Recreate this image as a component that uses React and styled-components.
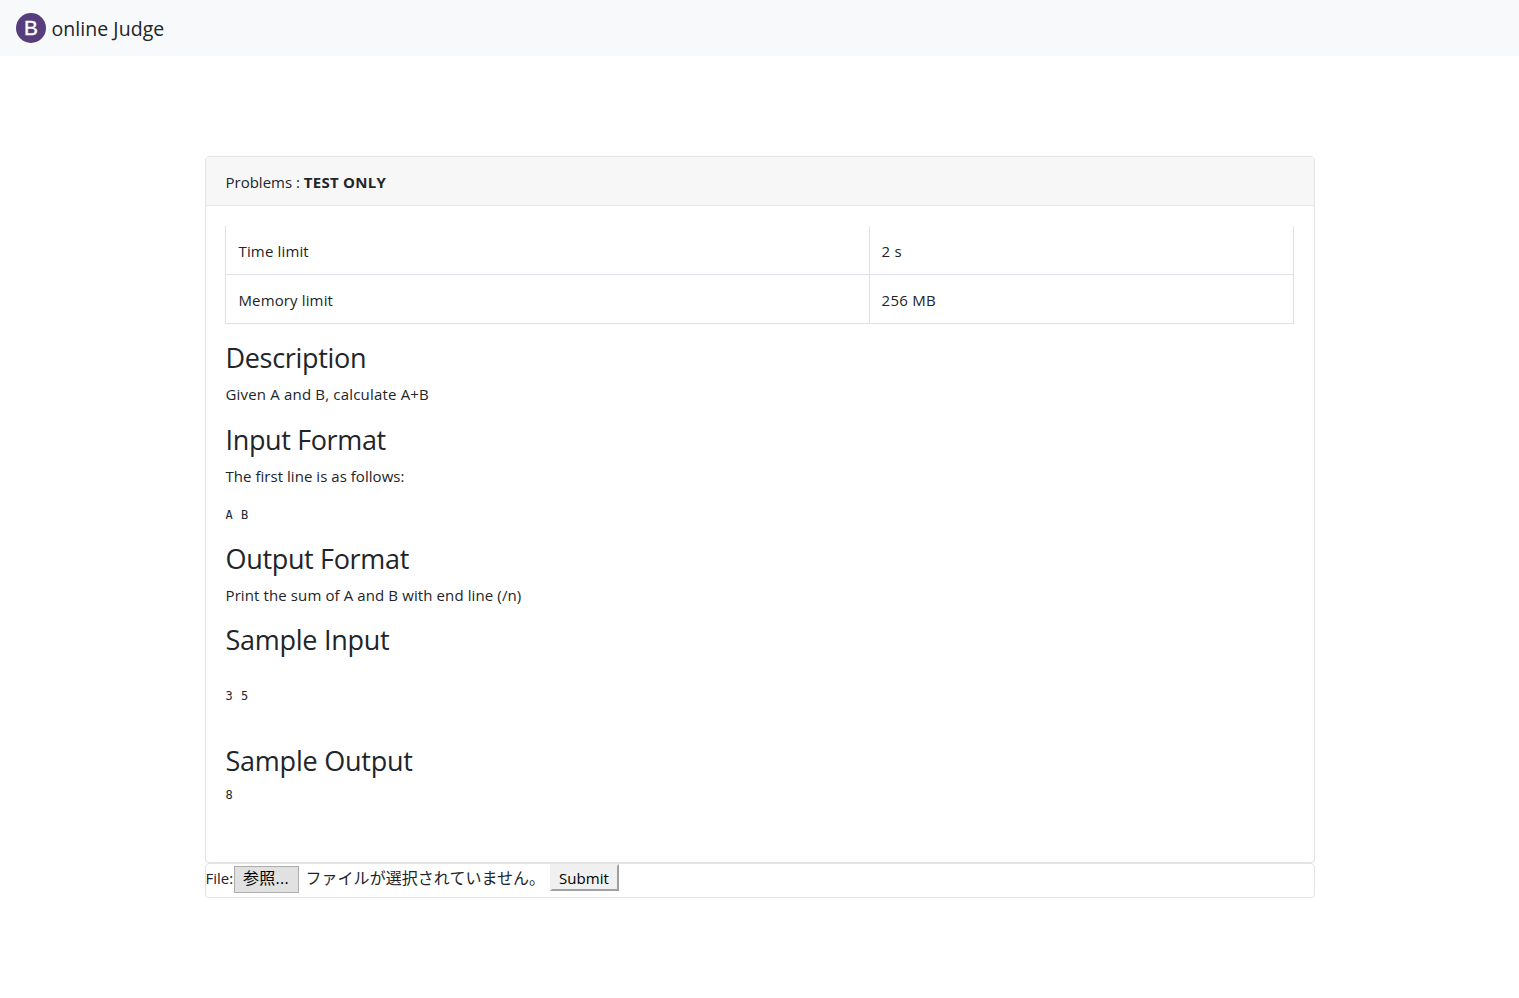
import React from "react";
import styled, { createGlobalStyle } from "styled-components";

const Global = createGlobalStyle`
  *, *::before, *::after { box-sizing: border-box; }
  body {
    margin: 0;
    background: #fff;
    color: #212529;
    font: 400 15px/24px "Open Sans", "Noto Sans CJK JP", sans-serif;
  }
`;

const Navbar = styled.nav`
  display: flex;
  align-items: center;
  height: 56px;
  padding: 0 16px;
  background: #f8f9fa;
`;

const Brand = styled.a`
  display: flex;
  align-items: center;
  gap: 5.5px;
  font-size: 19.5px;
  line-height: 30px;
  letter-spacing: 0.05px;
  white-space: nowrap;
`;

const BrandName = styled.span`
  padding-top: 2px;
`;

const Container = styled.main`
  width: 1110px;
  margin: 100px auto 0;
`;

const Card = styled.section`
  background: #fff;
  border: 1px solid #e3e3e3;
  border-radius: 4px;
`;

const CardHeader = styled.header`
  height: 49px;
  padding: 13px 20px 11px;
  background: #f7f7f7;
  border-bottom: 1px solid #e7e7e7;

  strong {
    font-weight: 700;
    letter-spacing: 0.25px;
  }
`;

const CardBody = styled.div`
  height: 656px;
  padding: 20px;
`;

const Limits = styled.table`
  width: 1069px;
  margin: 0 0 17.4px -0.5px;
  border-collapse: separate;
  border-spacing: 0;
  border-left: 1px solid #dee2e6;
`;

const Cell = styled.td`
  width: ${(p) => p.$width};
  height: 49px;
  padding: 13px 11px 11px ${(p) => p.$inset || 12}px;
  border: solid #dee2e6;
  border-width: 0 1px 1px 0;
  letter-spacing: ${(p) => p.$track || 0}px;
`;

const Heading = styled.h3`
  margin: 0 0 7.4px;
  font-size: 27px;
  font-weight: 400;
  line-height: 33.6px;
  letter-spacing: ${(p) => p.$track || 0}px;
`;

const Text = styled.p`
  margin: 0 0 ${(p) => p.$gap || 16.6}px;
  letter-spacing: ${(p) => p.$track || 0}px;
`;

const Code = styled.pre`
  margin: 0 0 16px;
  padding-top: ${(p) => p.$before || 0}px;
  padding-bottom: ${(p) => p.$after || 0}px;
  font: 12px/${(p) => p.$line || 21.6}px "DejaVu Sans Mono", monospace;
  letter-spacing: 0.48px;
`;

const UploadForm = styled.form`
  display: flex;
  align-items: flex-start;
  height: 33px;
`;

const Label = styled.label`
  padding-top: 2px;
  width: 28px;
`;

const BrowseButton = styled.button`
  width: 65px;
  height: 27px;
  margin-top: 2px;
  padding: 0 0 3px;
  background: #e1e1e1;
  border: 1px solid #adadad;
  color: #000;
  font: 16px/22px "Open Sans", "Noto Sans CJK JP", sans-serif;
  letter-spacing: 0.3px;
`;

const FileName = styled.span`
  width: 251px;
  padding: 1px 0 0 7px;
  font: 16px/24px "Noto Sans CJK JP", sans-serif;
  letter-spacing: 0.04px;
  white-space: nowrap;
`;

const SubmitButton = styled.button`
  width: 69px;
  height: 27px;
  padding: 0;
  background: #f0f0f0;
  border: 2px solid;
  border-color: #f0f0f0 #a0a0a0 #a0a0a0 #f0f0f0;
  color: #000;
  font: inherit;
  letter-spacing: 0.08px;
`;

function Logo() {
  return (
    <svg width="30" height="30" viewBox="0 0 30 30" aria-hidden="true">
      <circle cx="15" cy="15" r="15" fill="#563d7c" />
      <text x="15" y="21.8" textAnchor="middle" fill="#fff" stroke="#fff" strokeWidth="0.4"
        fontFamily="Liberation Sans, sans-serif" fontSize="20.8">B</text>
    </svg>
  );
}

export default function App() {
  return (
    <>
      <Global />
      <Navbar>
        <Brand>
          <Logo />
          <BrandName>online Judge</BrandName>
        </Brand>
      </Navbar>
      <Container>
        <Card>
          <CardHeader>
            Problems : <strong>TEST ONLY</strong>
          </CardHeader>
          <CardBody>
            <Limits>
              <tbody>
                <tr>
                  <Cell $width="644px" $inset={12.5} $track={0.15}>Time limit</Cell>
                  <Cell $inset={11.5} $track={0.3}>2 s</Cell>
                </tr>
                <tr>
                  <Cell $width="644px" $inset={12.5} $track={0.13}>Memory limit</Cell>
                  <Cell $inset={11.5} $track={0.3}>256 MB</Cell>
                </tr>
              </tbody>
            </Limits>
            <Heading $track={-0.32}>Description</Heading>
            <Text $track={0.18}>Given A and B, calculate A+B</Text>
            <Heading $track={-0.36}>Input Format</Heading>
            <Text $track={0.04}>The first line is as follows:</Text>
            <Code>A B</Code>
            <Heading $track={-0.33}>Output Format</Heading>
            <Text $gap={16} $track={0.11}>Print the sum of A and B with end line (/n)</Text>
            <Heading $track={-0.27}>Sample Input</Heading>
            <Code $line={22} $before={21.2} $after={21}>3 5</Code>
            <Heading $track={-0.23}>Sample Output</Heading>
            <Code $line={20.4}>8</Code>
          </CardBody>
        </Card>
        <Card>
          <UploadForm>
            <Label>File:</Label>
            <BrowseButton type="button">参照...</BrowseButton>
            <FileName>ファイルが選択されていません。</FileName>
            <SubmitButton type="button">Submit</SubmitButton>
          </UploadForm>
        </Card>
      </Container>
    </>
  );
}
